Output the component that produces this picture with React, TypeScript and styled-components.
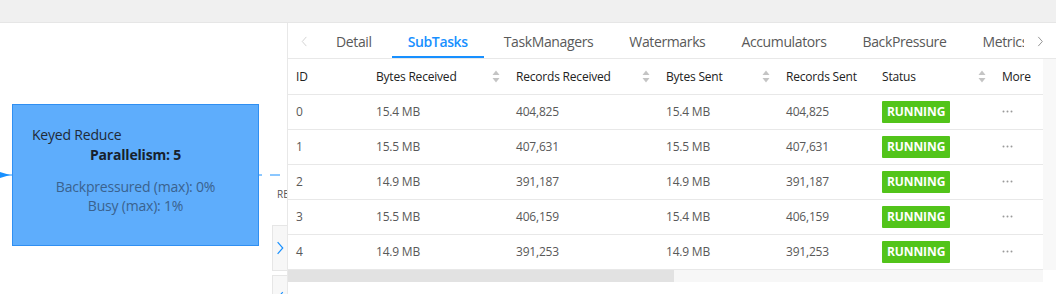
import React from "react";
import styled, { createGlobalStyle } from "styled-components";

const Global = createGlobalStyle`
  html, body { margin: 0; padding: 0; background: #fff; }
  body { font-family: "Open Sans", "Noto Sans", sans-serif; width: 1056px; height: 294px; overflow: hidden; }
  * { box-sizing: border-box; }
`;

const Page = styled.div`
  display: flex;
  flex-direction: column;
  width: 1056px;
  height: 294px;
  overflow: hidden;
`;

const TopBar = styled.div`
  height: 23px;
  background: #f0f0f0;
  border-bottom: 1px solid #e6e6e6;
  flex: none;
`;

const Main = styled.div`
  display: flex;
  flex: 1;
  min-height: 0;
`;

const Canvas = styled.div`
  position: relative;
  width: 287px;
  flex: none;
  overflow: hidden;
  background: #fff;
`;

const Edges = styled.svg`
  position: absolute;
  left: 0;
  top: 0;
`;

const Node = styled.div`
  position: absolute;
  left: 12px;
  top: 81px;
  width: 247px;
  height: 142px;
  background: #5eadfc;
  border: 1px solid #2f8ff2;
  display: flex;
  flex-direction: column;
  padding-top: 20px;
`;

const NodeTitle = styled.div`
  font-size: 14px;
  line-height: 20px;
  color: #1f2a36;
  padding-left: 19px;
  letter-spacing: -0.2px;
`;

const NodePar = styled.div`
  font-size: 14px;
  line-height: 19px;
  font-weight: 700;
  color: #17212c;
  text-align: center;
  letter-spacing: -0.2px;
`;

const NodeMetrics = styled.div`
  margin-top: 13px;
  font-size: 14px;
  line-height: 19px;
  color: #3a628e;
  text-align: center;
  letter-spacing: -0.2px;
`;

const EdgeLabel = styled.div`
  position: absolute;
  left: 277px;
  top: 164px;
  width: 10px;
  overflow: hidden;
  font-size: 10px;
  color: #555;
  white-space: nowrap;
`;

const SideButton = styled.div<{ $top: number }>`
  position: absolute;
  right: 0;
  top: ${(p) => p.$top}px;
  width: 15px;
  height: 46px;
  background: #f7f7f7;
  border: 1px solid #e6e6e6;
  border-right: none;
  display: flex;
  align-items: center;
  justify-content: center;
`;

const Panel = styled.div`
  flex: 1;
  min-width: 0;
  border-left: 1px solid #e8e8e8;
  display: flex;
  flex-direction: column;
  background: #fff;
`;

const TabNav = styled.div`
  height: 36px;
  border-bottom: 1px solid #e8e8e8;
  display: flex;
  align-items: stretch;
  flex: none;
`;

const NavArrow = styled.div`
  width: 32px;
  flex: none;
  display: flex;
  align-items: center;
  justify-content: center;
  padding-top: 2px;
`;

const TabList = styled.div`
  flex: 1;
  min-width: 0;
  overflow: hidden;
  display: flex;
  gap: 4px;
`;

const Tab = styled.div<{ $active?: boolean }>`
  position: relative;
  flex: none;
  padding: 2px 16px 0;
  display: flex;
  align-items: center;
  font-size: 14px;
  letter-spacing: -0.37px;
  color: ${(p) => (p.$active ? "#1890ff" : "#595959")};
  font-weight: ${(p) => (p.$active ? 600 : 400)};
  white-space: nowrap;
  &::after {
    content: "";
    display: ${(p) => (p.$active ? "block" : "none")};
    position: absolute;
    left: 0;
    right: 0;
    bottom: 0;
    height: 2px;
    background: #1890ff;
  }
`;

const TableArea = styled.div`
  display: flex;
  flex: none;
`;

const TableWrap = styled.div`
  width: 755px;
  flex: none;
`;

const VTrack = styled.div`
  flex: 1;
  background: #f8f8f8;
`;

const Table = styled.table`
  width: 755px;
  border-collapse: collapse;
  table-layout: fixed;
  font-size: 12px;
`;

const HeadCell = styled.th`
  height: 35px;
  padding: 0 8px;
  text-align: left;
  font-weight: 400;
  color: #222;
  border-bottom: 1px solid #e8e8e8;
  white-space: nowrap;
  letter-spacing: -0.2px;
`;

const HeadInner = styled.div`
  display: flex;
  align-items: center;
  justify-content: space-between;
`;

const Cell = styled.td`
  height: 35px;
  padding: 0 8px;
  color: #595959;
  border-bottom: 1px solid #e8e8e8;
  white-space: nowrap;
  letter-spacing: -0.2px;
  vertical-align: middle;
  & > svg {
    display: block;
  }
`;

const Badge = styled.span`
  display: inline-block;
  background: #52c41a;
  color: #fff;
  font-weight: 700;
  font-size: 12px;
  line-height: 22px;
  padding: 0 5px;
  border-radius: 1px;
  letter-spacing: -0.1px;
`;

const HScroll = styled.div`
  width: 755px;
  height: 12px;
  background: #f7f7f7;
  display: flex;
  flex: none;
`;

const HThumb = styled.div`
  width: 386px;
  background: #e2e2e2;
`;

const Sorter = () => (
  <svg width="8" height="13" viewBox="0 0 8 13">
    <path d="M4 0.5 L7.5 5 L0.5 5 Z" fill="#c4c4c4" />
    <path d="M4 12.5 L7.5 8 L0.5 8 Z" fill="#c4c4c4" />
  </svg>
);

const Dots = () => (
  <svg width="11" height="3" viewBox="0 0 11 3">
    <circle cx="1.5" cy="1.5" r="1" fill="#9a9a9a" />
    <circle cx="5.5" cy="1.5" r="1" fill="#9a9a9a" />
    <circle cx="9.5" cy="1.5" r="1" fill="#9a9a9a" />
  </svg>
);

const Chevron = ({ dir, color, size = 12 }: { dir: "left" | "right"; color: string; size?: number }) => (
  <svg width={size * 0.6} height={size} viewBox="0 0 6 12">
    <path
      d={dir === "right" ? "M0.8 1 L5.2 6 L0.8 11" : "M5.2 1 L0.8 6 L5.2 11"}
      fill="none"
      stroke={color}
      strokeWidth="1"
    />
  </svg>
);

const tabs = ["Detail", "SubTasks", "TaskManagers", "Watermarks", "Accumulators", "BackPressure", "Metrics"];

const columns: { title: string; width: number; sorter: boolean }[] = [
  { title: "ID", width: 80, sorter: false },
  { title: "Bytes Received", width: 140, sorter: true },
  { title: "Records Received", width: 150, sorter: true },
  { title: "Bytes Sent", width: 120, sorter: true },
  { title: "Records Sent", width: 96, sorter: false },
  { title: "Status", width: 120, sorter: true },
  { title: "More", width: 49, sorter: false },
];

const rows = [
  ["0", "15.4 MB", "404,825", "15.4 MB", "404,825"],
  ["1", "15.5 MB", "407,631", "15.5 MB", "407,631"],
  ["2", "14.9 MB", "391,187", "14.9 MB", "391,187"],
  ["3", "15.5 MB", "406,159", "15.4 MB", "406,159"],
  ["4", "14.9 MB", "391,253", "14.9 MB", "391,253"],
];

export default function App() {
  return (
    <Page>
      <Global />
      <TopBar />
      <Main>
        <Canvas>
          <Edges width="287" height="271" viewBox="0 0 287 271">
            <line x1="0" y1="152" x2="12" y2="152" stroke="#1890ff" strokeWidth="1" />
            <path d="M0 149 L10 152 L0 155 Z" fill="#1890ff" />
            <line x1="252" y1="152" x2="287" y2="152" stroke="#1890ff" strokeWidth="1" strokeDasharray="10 8" />
          </Edges>
          <Node>
            <NodeTitle>Keyed Reduce</NodeTitle>
            <NodePar>Parallelism: 5</NodePar>
            <NodeMetrics>
              Backpressured (max): 0%
              <br />
              Busy (max): 1%
            </NodeMetrics>
          </Node>
          <EdgeLabel>REBALANCE</EdgeLabel>
          <SideButton $top={202}>
            <Chevron dir="right" color="#1890ff" size={14} />
          </SideButton>
          <SideButton $top={252}>
            <Chevron dir="left" color="#1890ff" size={14} />
          </SideButton>
        </Canvas>
        <Panel>
          <TabNav>
            <NavArrow>
              <Chevron dir="left" color="#cfcfcf" size={11} />
            </NavArrow>
            <TabList>
              {tabs.map((t) => (
                <Tab key={t} $active={t === "SubTasks"}>
                  {t}
                </Tab>
              ))}
            </TabList>
            <NavArrow>
              <Chevron dir="right" color="#8c8c8c" size={11} />
            </NavArrow>
          </TabNav>
          <TableArea>
            <TableWrap>
              <Table>
                <colgroup>
                  {columns.map((c) => (
                    <col key={c.title} style={{ width: c.width }} />
                  ))}
                </colgroup>
                <thead>
                  <tr>
                    {columns.map((c) => (
                      <HeadCell key={c.title}>
                        <HeadInner>
                          <span>{c.title}</span>
                          {c.sorter && <Sorter />}
                        </HeadInner>
                      </HeadCell>
                    ))}
                  </tr>
                </thead>
                <tbody>
                  {rows.map((r) => (
                    <tr key={r[0]}>
                      {r.map((v, i) => (
                        <Cell key={i}>{v}</Cell>
                      ))}
                      <Cell>
                        <Badge>RUNNING</Badge>
                      </Cell>
                      <Cell>
                        <Dots />
                      </Cell>
                    </tr>
                  ))}
                </tbody>
              </Table>
            </TableWrap>
            <VTrack />
          </TableArea>
          <HScroll>
            <HThumb />
          </HScroll>
        </Panel>
      </Main>
    </Page>
  );
}
